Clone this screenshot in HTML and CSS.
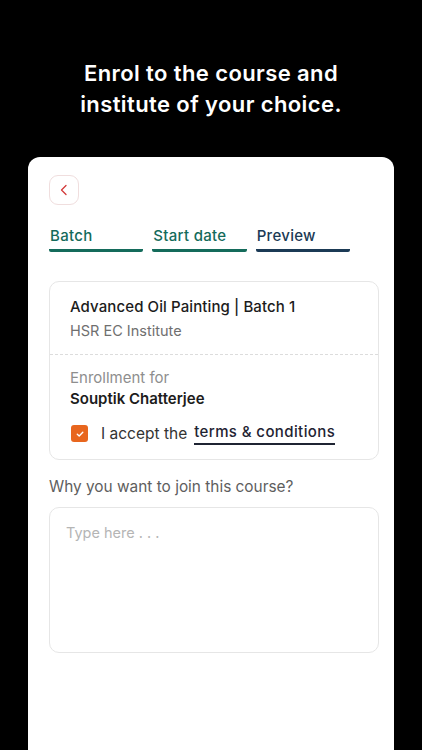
FILE: index.html
```html
<!DOCTYPE html>
<html>
<head>
<meta charset="utf-8">
<link rel="stylesheet" href="styles.css">
</head>
<body>
<div class="screen">
  <h1 class="headline">Enrol to the course and<br>institute of your choice.</h1>
  <div class="sheet">
    <button class="back">
      <svg width="12" height="12" viewBox="0 0 12 12"><path d="M8 1.5 L3.5 6 L8 10.5" fill="none" stroke="#d23a3a" stroke-width="1.3" stroke-linecap="round" stroke-linejoin="round"/></svg>
    </button>
    <div class="tabs">
      <div class="tab done">Batch</div>
      <div class="tab done">Start date</div>
      <div class="tab current">Preview</div>
    </div>
    <div class="info">
      <div class="info-top">
        <div class="course">Advanced Oil Painting | Batch 1</div>
        <div class="institute">HSR EC Institute</div>
      </div>
      <div class="info-bottom">
        <div class="for">Enrollment for</div>
        <div class="name">Souptik Chatterjee</div>
        <div class="accept">
          <span class="check">
            <svg width="10" height="10" viewBox="0 0 10 10"><path d="M2.3 5.2 L4.2 7 L7.8 3.3" fill="none" stroke="#fff" stroke-width="1.4" stroke-linecap="round" stroke-linejoin="round"/></svg>
          </span>
          <span class="accept-text">I accept the</span>
          <span class="terms">terms &amp; conditions</span>
        </div>
      </div>
    </div>
    <div class="question">Why you want to join this course?</div>
    <div class="textarea"><span class="placeholder">Type here . . .</span></div>
  </div>
</div>
</body>
</html>
```

FILE: styles.css
```css
* { box-sizing: border-box; }
html, body { margin: 0; padding: 0; background: #000; }
body {
  width: 422px;
  height: 750px;
  overflow: hidden;
  font-family: Inter, "Open Sans", sans-serif;
}
.screen {
  display: flex;
  flex-direction: column;
  align-items: center;
  height: 750px;
}
.headline {
  margin: 58px 0 0;
  color: #fff;
  font-size: 22px;
  line-height: 31px;
  font-weight: 600;
  text-align: center;
  letter-spacing: 0.4px;
}
.sheet {
  margin-top: 37px;
  width: 366px;
  flex: 1;
  background: #fff;
  border-radius: 12px 12px 0 0;
  padding: 18px 16px 0 21px;
  display: flex;
  flex-direction: column;
}
.back {
  width: 30px;
  height: 30px;
  border: 1px solid #f0dede;
  border-radius: 9px;
  background: #fff;
  display: flex;
  align-items: center;
  justify-content: center;
  padding: 0;
}
.tabs {
  display: flex;
  gap: 9px;
  margin-top: 21px;
  width: 301px;
}
.tab {
  flex: 1;
  font-size: 15px;
  font-weight: 500;
  padding: 0 0 3px 1px;
  border-bottom: 3px solid;
  border-radius: 0 0 2px 2px;
  line-height: 20px;
  letter-spacing: 0.3px;
}
.tab.done { color: #146b5b; border-color: #146b5b; }
.tab.current { color: #1b3a55; border-color: #1b3a55; }
.info {
  margin-top: 29px;
  width: 330px;
  border: 1px solid #e6e6e6;
  border-radius: 10px;
}
.info-top {
  padding: 14px 20px 13px;
  border-bottom: 1px dashed #dcdcdc;
}
.course {
  font-size: 15px;
  font-weight: 500;
  color: #1c1c1c;
  line-height: 22px;
  letter-spacing: 0.1px;
}
.institute {
  margin-top: 3px;
  font-size: 14.5px;
  color: #6f6f6f;
  line-height: 20px;
}
.info-bottom {
  padding: 13px 20px 14px;
}
.for {
  font-size: 15px;
  color: #8e8e8e;
  line-height: 20px;
}
.name {
  font-size: 15px;
  font-weight: 600;
  color: #1c1c1c;
  line-height: 22px;
}
.accept {
  display: flex;
  align-items: center;
  margin-top: 12px;
}
.check {
  width: 17px;
  height: 17px;
  margin-left: 1px;
  background: #e8661e;
  border-radius: 3px;
  display: flex;
  align-items: center;
  justify-content: center;
}
.accept-text {
  margin-left: 13px;
  font-size: 15.5px;
  color: #333;
}
.terms {
  margin-left: 7px;
  font-size: 15px;
  font-weight: 500;
  color: #1f2433;
  border-bottom: 2px solid #1f2433;
  padding-bottom: 1px;
  line-height: 20px;
  letter-spacing: 0.4px;
}
.question {
  margin-top: 17px;
  font-size: 15.4px;
  color: #5e5e5e;
  line-height: 20px;
}
.textarea {
  margin-top: 10px;
  width: 330px;
  height: 146px;
  border: 1px solid #e6e6e6;
  border-radius: 10px;
  padding: 14px 16px;
}
.placeholder {
  font-size: 14.5px;
  color: #b5b5b5;
}
```
